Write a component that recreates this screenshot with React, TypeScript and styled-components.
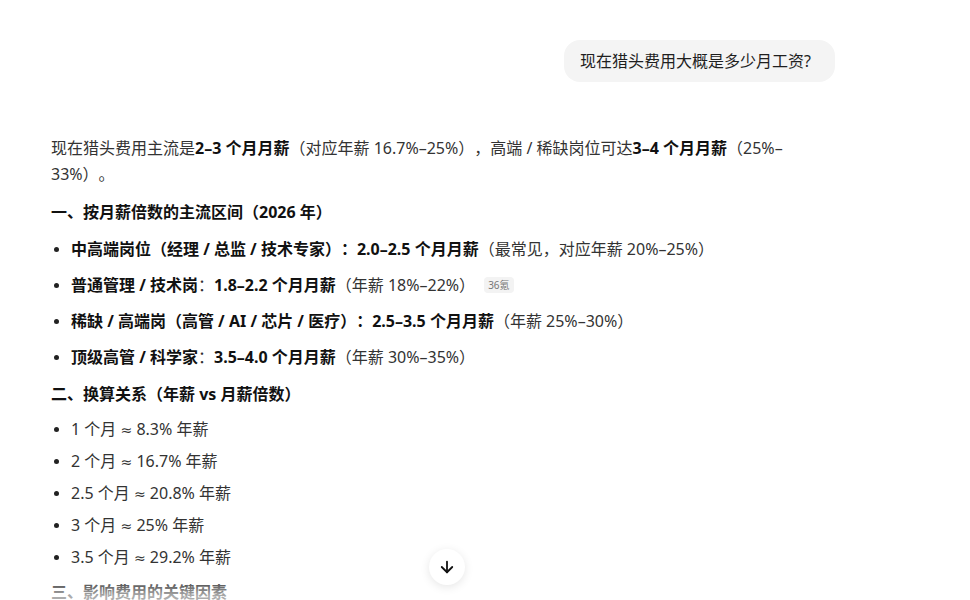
import React from 'react';
import styled, { createGlobalStyle } from 'styled-components';
import { ArrowDown } from 'lucide-react';

const GlobalStyle = createGlobalStyle`
  html, body {
    margin: 0;
    padding: 0;
    background: #ffffff;
    overflow: hidden;
  }
  body {
    font-family: "Noto Sans", "Noto Sans CJK SC", sans-serif;
    color: #1f1f1f;
    text-spacing-trim: space-all;
  }
`;

type Part = { text: string; bold?: boolean };

const mainList: { parts: Part[]; badge?: string }[] = [
  {
    parts: [
      { text: '中高端岗位（经理 / 总监 / 技术专家）：', bold: true },
      { text: '2.0–2.5 个月月薪', bold: true },
      { text: '（最常见，对应年薪 20%–25%）' },
    ],
  },
  {
    parts: [
      { text: '普通管理 / 技术岗', bold: true },
      { text: '：' },
      { text: '1.8–2.2 个月月薪', bold: true },
      { text: '（年薪 18%–22%）' },
    ],
    badge: '36氪',
  },
  {
    parts: [
      { text: '稀缺 / 高端岗（高管 / AI / 芯片 / 医疗）：', bold: true },
      { text: '2.5–3.5 个月月薪', bold: true },
      { text: '（年薪 25%–30%）' },
    ],
  },
  {
    parts: [
      { text: '顶级高管 / 科学家', bold: true },
      { text: '：' },
      { text: '3.5–4.0 个月月薪', bold: true },
      { text: '（年薪 30%–35%）' },
    ],
  },
];

const ratios = [
  ['1 个月', '8.3% 年薪'],
  ['2 个月', '16.7% 年薪'],
  ['2.5 个月', '20.8% 年薪'],
  ['3 个月', '25% 年薪'],
  ['3.5 个月', '29.2% 年薪'],
];

export default function App() {
  return (
    <Page>
      <GlobalStyle />
      <Column>
        <UserRow>
          <Bubble>现在猎头费用大概是多少月工资?</Bubble>
        </UserRow>
        <Answer>
          <Para>
            现在猎头费用主流是<b>2–3 个月月薪</b>（对应年薪 16.7%–25%），高端 / 稀缺岗位可达
            <b>3–4 个月月薪</b>（25%–<wbr />33%）。
          </Para>
          <Heading>一、按月薪倍数的主流区间（2026 年）</Heading>
          <List>
            {mainList.map((item, i) => (
              <Item key={i} $h={36}>
                {item.parts.map((p, j) =>
                  p.bold ? <Strong key={j}>{p.text}</Strong> : <span key={j}>{p.text}</span>
                )}
                {item.badge && <Badge>{item.badge}</Badge>}
              </Item>
            ))}
          </List>
          <Heading>二、换算关系（年薪 vs 月薪倍数）</Heading>
          <List>
            {ratios.map(([a, b]) => (
              <Item key={a} $h={32}>
                {a} <Approx>≈</Approx> {b}
              </Item>
            ))}
          </List>
          <Heading>三、影响费用的关键因素</Heading>
        </Answer>
      </Column>
      <Fade />
      <ScrollButton>
        <ArrowDown size={18} strokeWidth={2.4} color="#111" />
      </ScrollButton>
    </Page>
  );
}

const Page = styled.div`
  position: relative;
  width: 970px;
  height: 600px;
  overflow: hidden;
  padding-top: 40px;
  box-sizing: border-box;
`;

const Column = styled.div`
  width: 784px;
  margin-left: 51px;
`;

const UserRow = styled.div`
  display: flex;
  justify-content: flex-end;
`;

const Bubble = styled.div`
  background: #f4f4f4;
  border-radius: 16px;
  padding: 9px 24px 9px 16px;
  font-size: 16px;
  line-height: 24px;
  color: #1f1f1f;
`;

const Answer = styled.div`
  margin-top: 53px;
  font-size: 16px;
  line-height: 26px;
`;

const Para = styled.p`
  margin: 0 0 12px;
  color: #333;
  b {
    color: #111;
    font-weight: 700;
  }
`;

const Heading = styled.h3`
  margin: 6px 0 6px;
  font-size: 16px;
  line-height: 26px;
  font-weight: 700;
  color: #111;
`;

const List = styled.ul`
  margin: 0;
  padding: 0 0 0 20px;
  color: #333;
`;

const Item = styled.li<{ $h: number }>`
  height: ${(p) => p.$h}px;
  padding: ${(p) => (p.$h - 26) / 2}px 0;
  box-sizing: border-box;
  line-height: 26px;
  &::marker {
    color: #222;
    font-size: 14px;
  }
`;

const Approx = styled.span`
  font-family: "DejaVu Sans", sans-serif;
  font-size: 14px;
  line-height: 1;
`;

const Strong = styled.span`
  font-weight: 700;
  color: #111;
`;

const Badge = styled.span`
  display: inline-block;
  margin-left: 9px;
  padding: 0 4px;
  background: #f3f3f3;
  border-radius: 4px;
  font-size: 10px;
  line-height: 16px;
  color: #777;
  vertical-align: 2px;
`;

const Fade = styled.div`
  position: absolute;
  left: 0;
  right: 0;
  bottom: 0;
  height: 26px;
  background: linear-gradient(to bottom, rgba(255, 255, 255, 0), rgba(255, 255, 255, 0.65) 85%);
  pointer-events: none;
`;

const ScrollButton = styled.button`
  position: absolute;
  left: 429px;
  top: 549px;
  width: 36px;
  height: 36px;
  border-radius: 50%;
  border: none;
  background: #ffffff;
  box-shadow: 0 2px 10px rgba(0, 0, 0, 0.1);
  display: flex;
  align-items: center;
  justify-content: center;
  padding: 0;
`;
